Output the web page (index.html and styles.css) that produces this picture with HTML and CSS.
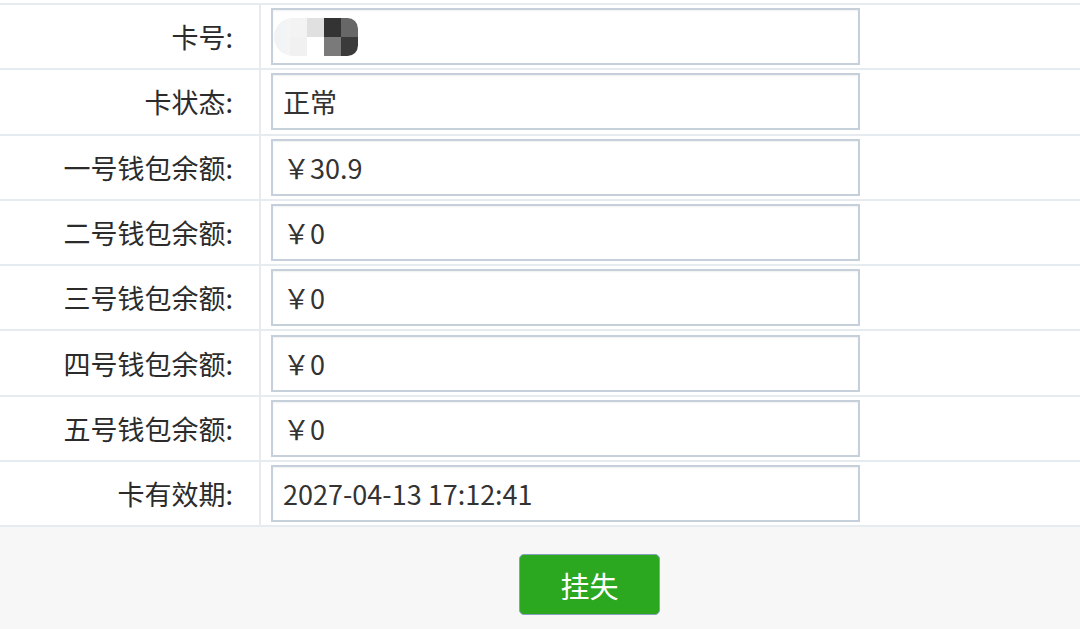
FILE: index.html
```html
<!DOCTYPE html>
<html lang="zh-CN">
<head>
<meta charset="utf-8">
<title>卡信息</title>
<link rel="stylesheet" href="styles.css">
</head>
<body>
<div class="page">
  <div class="form">
    <div class="row">
      <div class="label">卡号:</div>
      <div class="cell"><div class="field">
        <div class="mosaic">
          <span class="m m1"></span><span class="m m2"></span><span class="m m3"></span><span class="m m4"></span>
          <span class="m m5"></span><span class="m m6"></span><span class="m m7"></span><span class="m m8"></span>
        </div>
      </div></div>
    </div>
    <div class="row">
      <div class="label">卡状态:</div>
      <div class="cell"><div class="field">正常</div></div>
    </div>
    <div class="row">
      <div class="label">一号钱包余额:</div>
      <div class="cell"><div class="field">￥30.9</div></div>
    </div>
    <div class="row">
      <div class="label">二号钱包余额:</div>
      <div class="cell"><div class="field">￥0</div></div>
    </div>
    <div class="row">
      <div class="label">三号钱包余额:</div>
      <div class="cell"><div class="field">￥0</div></div>
    </div>
    <div class="row">
      <div class="label">四号钱包余额:</div>
      <div class="cell"><div class="field">￥0</div></div>
    </div>
    <div class="row">
      <div class="label">五号钱包余额:</div>
      <div class="cell"><div class="field">￥0</div></div>
    </div>
    <div class="row">
      <div class="label">卡有效期:</div>
      <div class="cell"><div class="field">2027-04-13 17:12:41</div></div>
    </div>
  </div>
  <div class="footer">
    <button class="btn" type="button">挂失</button>
  </div>
</div>
</body>
</html>
```

FILE: styles.css
```css
* { box-sizing: border-box; }
html, body {
  margin: 0;
  padding: 0;
  background: #ffffff;
}
body {
  font-family: "Noto Sans CJK SC", sans-serif;
  color: #333333;
}
.page {
  width: 1080px;
  height: 629px;
  overflow: hidden;
  padding-top: 3px;
  display: flex;
  flex-direction: column;
}
.form {
  border-top: 2px solid #e6ebf0;
}
.row {
  display: grid;
  grid-template-columns: 261px 1fr;
  height: 65.3px;
  border-bottom: 2px solid #e6ebf0;
}
.label {
  border-right: 2px solid #e6ebf0;
  display: flex;
  align-items: center;
  justify-content: flex-end;
  padding-right: 26px;
  font-size: 27px;
  color: #2b2b2b;
}
.cell {
  display: flex;
  align-items: center;
  padding-left: 10px;
}
.field {
  width: 589px;
  height: 57px;
  border: 2px solid #c5d0da;
  box-shadow: inset 0 1px 2px rgba(0, 0, 0, 0.06);
  background: #ffffff;
  display: flex;
  align-items: center;
  padding-left: 10px;
  font-size: 27px;
  color: #333333;
}
.mosaic {
  display: grid;
  grid-template-columns: repeat(4, 17px);
  grid-template-rows: 19px 19px;
  margin-left: -9px;
  padding-left: 16px;
  border-radius: 20px 11px 11px 20px;
  overflow: hidden;
  background: linear-gradient(to right, #f0f2f4, #fbfbfb 60%, #ffffff);
}
.m { display: block; }
.m1 { background: #f3f3f3; }
.m2 { background: #e0e0e0; }
.m3 { background: #333333; }
.m4 { background: #676767; }
.m5 { background: #f1f1f1; }
.m6 { background: #ffffff; }
.m7 { background: #7a7a7a; }
.m8 { background: #3a3a3a; }
.footer {
  flex: 1;
  background: #f7f7f7;
  padding-top: 27px;
  padding-left: 519px;
}
.btn {
  width: 141px;
  height: 61px;
  border: 1px solid #87a0bd;
  border-radius: 5px;
  background: #2ba720;
  color: #ffffff;
  font-family: "Noto Sans CJK SC", sans-serif;
  font-size: 29px;
  padding: 0;
  cursor: pointer;
}
```
